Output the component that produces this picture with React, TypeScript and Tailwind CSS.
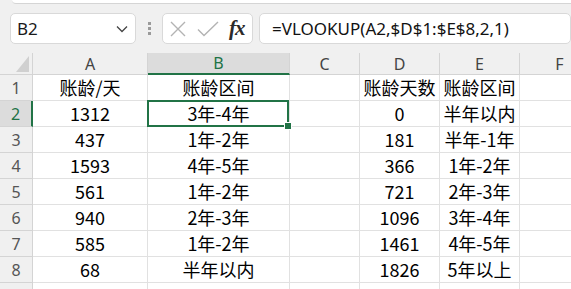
import { Fragment } from 'react'

const cols = [
  { key: 'A', w: 'w-[115px]' },
  { key: 'B', w: 'w-[142px]' },
  { key: 'C', w: 'w-[70px]' },
  { key: 'D', w: 'w-[80px]' },
  { key: 'E', w: 'w-[80px]' },
  { key: 'F', w: 'w-[80px]' },
]

const rows: string[][] = [
  ['账龄/天', '账龄区间', '', '账龄天数', '账龄区间', ''],
  ['1312', '3年-4年', '', '0', '半年以内', ''],
  ['437', '1年-2年', '', '181', '半年-1年', ''],
  ['1593', '4年-5年', '', '366', '1年-2年', ''],
  ['561', '1年-2年', '', '721', '2年-3年', ''],
  ['940', '2年-3年', '', '1096', '3年-4年', ''],
  ['585', '1年-2年', '', '1461', '4年-5年', ''],
  ['68', '半年以内', '', '1826', '5年以上', ''],
]

function Toolbar() {
  return (
    <div className="mt-[9px] h-[31px] flex items-stretch">
      {/* name box */}
      <div className="ml-[10px] w-[126px] flex items-center justify-between bg-white border border-[#d9d9d9] rounded-[5px] pl-[6px] pr-[7px]">
        <span className="text-[17px] text-[#1a1a1a] leading-none">B2</span>
        <svg width="12" height="8" viewBox="0 0 12 8" fill="none">
          <path d="M1 1.5 L6 6.5 L11 1.5" stroke="#444" strokeWidth="1.3" />
        </svg>
      </div>

      {/* drag dots */}
      <div className="ml-[12px] w-[3px] flex flex-col justify-center gap-[2px]">
        <span className="block w-[3px] h-[3px] bg-[#9a9a9a]" />
        <span className="block w-[3px] h-[3px] bg-[#9a9a9a]" />
        <span className="block w-[3px] h-[3px] bg-[#9a9a9a]" />
      </div>

      {/* cancel / enter / fx */}
      <div className="ml-[11px] w-[91px] flex items-center bg-white border border-[#d9d9d9] rounded-[5px] pl-[7px]">
        <svg width="16" height="16" viewBox="0 0 16 16" fill="none">
          <path d="M1 1 L15 15 M15 1 L1 15" stroke="#b3b3b3" strokeWidth="1.4" />
        </svg>
        <svg className="ml-[11px]" width="22" height="16" viewBox="0 0 22 16" fill="none">
          <path d="M1 8.5 L7 14.5 L21 1" stroke="#b3b3b3" strokeWidth="1.4" />
        </svg>
        <span className="ml-[10px] text-[21px] leading-none italic text-[#2b2b2b] font-['Liberation_Serif',serif] font-bold tracking-[-1px]">
          fx
        </span>
      </div>

      {/* formula */}
      <div className="ml-[6px] flex-1 flex items-center bg-white border border-[#d9d9d9] rounded-[5px] pl-[12px]">
        <span className="text-[17px] leading-none text-[#111]">=VLOOKUP(A2,$D$1:$E$8,2,1)</span>
      </div>
    </div>
  )
}

function HeaderRow() {
  return (
    <div className="flex h-[22px]">
      <div className="w-[33px] shrink-0 border-r border-b border-[#d4d4d4] flex items-end justify-end pr-[3px] pb-[2px]">
        <svg width="13" height="16" viewBox="0 0 13 16">
          <path d="M13 0 L13 16 L0 16 Z" fill="#d0d0d0" />
        </svg>
      </div>
      {cols.map((c) => {
        const sel = c.key === 'B'
        return (
          <div
            key={c.key}
            className={`${c.w} shrink-0 flex items-center justify-center border-r border-[#d4d4d4] text-[16px] ${
              sel ? 'bg-[#dcdcdc] text-[#217346] border-b-2 border-b-[#217346]' : 'text-[#444] border-b border-b-[#d4d4d4]'
            }`}
          >
            {c.key}
          </div>
        )
      })}
    </div>
  )
}

export default function App() {
  return (
    <div className="w-[571px] h-[289px] overflow-hidden bg-[#f0f0f0] font-['Noto_Sans','Noto_Sans_CJK_SC',sans-serif]">
      <div className="h-[4px] ml-[12px] bg-white border-b border-[#d5d5d5] rounded-bl-[6px]" />
      <Toolbar />

      <div className="mt-[9px]">
        <HeaderRow />
        {rows.map((r, i) => {
          const n = i + 1
          const selRow = n === 2
          return (
            <div key={n} className="flex h-[26px]">
              <div
                className={`w-[33px] shrink-0 flex items-center justify-center border-b border-[#d4d4d4] text-[16px] ${
                  selRow ? 'bg-[#dcdcdc] text-[#217346] border-r-2 border-r-[#217346]' : 'text-[#555] border-r border-r-[#d4d4d4]'
                }`}
              >
                {n}
              </div>
              {cols.map((c, j) => {
                const sel = selRow && c.key === 'B'
                return (
                  <Fragment key={c.key}>
                    <div
                      className={`${c.w} shrink-0 relative bg-white border-r border-b border-[#e1e1e1] flex items-center justify-center text-[18px] text-black font-['Noto_Sans_CJK_SC',sans-serif] whitespace-nowrap`}
                    >
                      {r[j]}
                      {sel && (
                        <div className="absolute left-[-1px] top-[-1px] right-0 bottom-[-1px] border-2 border-[#217346] z-10">
                          <span className="absolute right-[-5px] bottom-[-5px] w-[8px] h-[8px] bg-[#217346] border border-white" />
                        </div>
                      )}
                    </div>
                  </Fragment>
                )
              })}
            </div>
          )
        })}
        {/* partly visible row 9 */}
        <div className="flex h-[26px]">
          <div className="w-[33px] shrink-0 border-r border-[#d4d4d4]" />
          {cols.map((c) => (
            <div key={c.key} className={`${c.w} shrink-0 bg-white border-r border-[#e1e1e1]`} />
          ))}
        </div>
      </div>
    </div>
  )
}
